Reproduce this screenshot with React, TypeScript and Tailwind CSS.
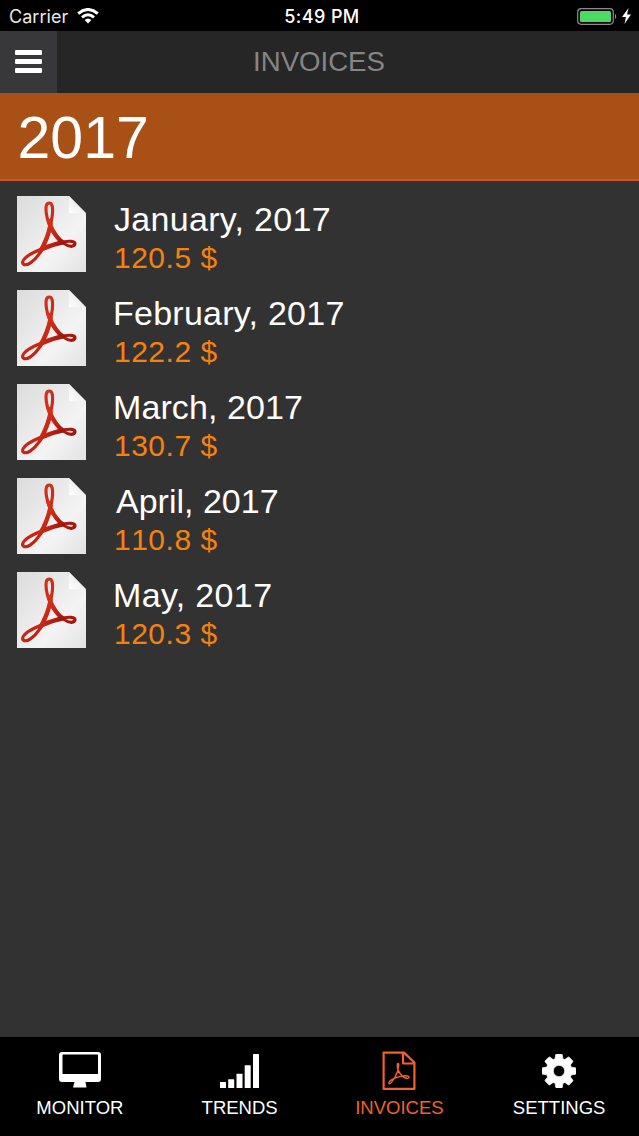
const invoices = [
  { month: "January, 2017", amount: "120.5 $", offset: "pl-[28px] tracking-[0.3px]" },
  { month: "February, 2017", amount: "122.2 $", offset: "pl-[27px] tracking-[0.25px]" },
  { month: "March, 2017", amount: "130.7 $", offset: "pl-[27px] tracking-[0.1px]" },
  { month: "April, 2017", amount: "110.8 $", offset: "pl-[30px]" },
  { month: "May, 2017", amount: "120.3 $", offset: "pl-[27px] tracking-[0.35px]" },
];

const tabs = [
  {
    label: "MONITOR",
    icon: (
      <svg className="mb-[2px] h-[36px] w-[42px]" viewBox="0 0 42 36" fill="currentColor">
        <path
          fillRule="evenodd"
          d="M3 0H39a3 3 0 0 1 3 3V27a3 3 0 0 1-3 3H26.500L27.500 35.500H14L15.500 30H3a3 3 0 0 1-3-3V3a3 3 0 0 1 3-3zM4 2.500Q3.500 2.500 3.500 3V22H39V3Q39 2.500 38.500 2.500z"
        />
      </svg>
    ),
  },
  {
    label: "TRENDS",
    icon: (
      <svg className="mb-[2px] h-[34px] w-[39px]" viewBox="0 0 39 34" fill="currentColor">
        <rect x="0" y="28" width="6" height="6" rx=".5" />
        <rect x="8.200" y="25.200" width="6" height="8.800" rx=".5" />
        <rect x="16.500" y="19.700" width="6" height="14.300" rx=".5" />
        <rect x="24.700" y="11.300" width="6" height="22.700" rx=".5" />
        <rect x="33" y="0" width="6" height="34" rx=".5" />
      </svg>
    ),
  },
  {
    label: "INVOICES",
    active: true,
    icon: (
      <svg className="h-[39px] w-[34px]" viewBox="0 0 34 39" fill="none" stroke="currentColor" strokeLinejoin="round" strokeLinecap="round">
        <path strokeWidth="2.200" d="M1.600 1.600H22L32.400 11.500V37.900H1.600zM21 1.600V12.500H32.400" />
        <path
          strokeWidth="1.500"
          d="M16 12.500C15 12.500 15.200 15 15.700 17.500C16.800 21.500 19 24.500 22.500 26.500C24.500 27.700 27 27.700 27 26.300C27 25 24.500 24.500 21.500 24.900C17 25.500 12.500 26.700 9.500 28.800C7 30.500 6.300 32.300 7.300 32.700C8.600 33.200 11 29.500 13 26C15 22.500 16.500 17.500 16.700 15C16.800 13.200 16.700 12.500 16 12.500z"
        />
      </svg>
    ),
  },
  {
    label: "SETTINGS",
    icon: (
      <svg className="mb-[2px] mr-px h-[34px] w-[34px]" viewBox="0 0 1536 1536" fill="currentColor" stroke="currentColor" strokeWidth="30" strokeLinejoin="round">
        <path d="M1024 768q0-106-75-181t-181-75-181 75-75 181 75 181 181 75 181-75 75-181zM1536 659v222q0 12-8 23t-20 13l-185 28q-19 54-39 91 35 50 107 138 10 12 10 25t-9 23q-27 37-99 108t-94 71q-12 0-26-9l-138-108q-44 23-91 38-16 136-29 186-7 28-36 28h-222q-14 0-24.500-8.500t-11.500-21.500l-28-184q-49-16-90-37l-141 107q-10 9-25 9-14 0-25-11-126-114-165-168-7-10-7-23 0-12 8-23 15-21 51-66.500t54-70.500q-27-50-41-99l-183-27q-13-2-21-12.500t-8-23.500v-222q0-12 8-23t19-13l186-28q14-46 39-92-40-57-107-138-10-12-10-24 0-10 9-23 26-36 98.500-107.500t94.500-71.500q13 0 26 10l138 107q44-23 91-38 16-136 29-186 7-28 36-28h222q14 0 24.500 8.500t11.500 21.500l28 184q49 16 90 37l142-107q9-9 24-9 13 0 25 10 129 119 165 170 7 8 7 22 0 12-8 23-15 21-51 66.500t-54 70.500q26 50 41 98l183 28q13 2 21 12.500t8 23.500z" />
      </svg>
    ),
  },
];

function PdfIcon() {
  return (
    <svg className="h-[76px] w-[69px] shrink-0" viewBox="0 0 207 228" fill="none">
      <defs>
        <linearGradient id="page" x1="0" y1="0" x2="1" y2="1">
          <stop offset="0" stopColor="#dcdcdc" />
          <stop offset=".3" stopColor="#e6e6e6" />
          <stop offset=".65" stopColor="#f4f4f4" />
          <stop offset="1" stopColor="#e2e2e2" />
        </linearGradient>
        <linearGradient id="fold" x1="0" y1="1" x2="1" y2="0">
          <stop offset="0" stopColor="#ffffff" />
          <stop offset="1" stopColor="#e0e0e0" />
        </linearGradient>
        <linearGradient id="ribbon" x1="0" y1="0" x2="1" y2="1">
          <stop offset="0" stopColor="#dc3a22" />
          <stop offset=".55" stopColor="#c42513" />
          <stop offset="1" stopColor="#8f0d08" />
        </linearGradient>
      </defs>
      <path d="M0 0H156L207 52V228H0z" fill="url(#page)" />
      <path d="M156 0L207 52H156z" fill="url(#fold)" />
      {/* one closed ribbon, with the long legs drawn again to be heavier than the loops */}
      <path
        d="M97 21C86 21 86 36 88 53C91 78 102 100 118 120C134 139 150 151 163 151C178 149 177 137 163 136C138 134 88 150 53 168C25 181 11 197 19 204C28 212 51 197 67 173C86 143 102 92 106 58C108 34 106 21 97 21z"
        stroke="url(#ribbon)"
        strokeWidth="9.500"
        strokeLinejoin="round"
      />
      <path
        d="M95 74C100 92 107 106 118 120C124 128 131 135 137 139M70 166C84 142 96 110 101 84M74 160C92 151 116 143 138 139"
        stroke="url(#ribbon)"
        strokeWidth="13"
        strokeLinecap="round"
      />
    </svg>
  );
}

function StatusBar() {
  return (
    <div className="grid h-[31px] grid-cols-3 items-center bg-black font-['Inter',sans-serif] text-[18px] leading-[31px] text-[#e8e8e8]">
      <div className="flex items-center gap-[9px] pl-[9px]">
        <span className="pt-px tracking-[0.05px]">Carrier</span>
        <svg className="h-[16px] w-[22px]" viewBox="0 0 22 16" fill="none" stroke="white" strokeWidth="3">
          <path d="M1.200 5.600Q11-2.600 20.800 5.600" />
          <path d="M5 9.300Q11 4.200 17 9.300" />
          <path d="M11 15.500L7.600 12Q11 9 14.400 12z" fill="white" stroke="none" />
        </svg>
      </div>
      <div className="pl-[5px] pt-px text-center font-medium tracking-[0.4px] text-white">5:49 PM</div>
      <div className="flex items-center justify-end gap-[4px] pr-[8px]">
        <svg className="h-[17px] w-[41px]" viewBox="0 0 41 17">
          <rect x=".7" y=".7" width="35.600" height="15.600" rx="3.500" fill="none" stroke="#8c8c8c" strokeWidth="1.200" />
          <rect x="3" y="3" width="31" height="11" rx="1.500" fill="#4cd964" />
          <path d="M38 5.500Q40.500 8.500 38 11.500z" fill="#8c8c8c" />
        </svg>
        <svg className="h-[16px] w-[9px]" viewBox="0 0 9 16" fill="white">
          <path d="M6.500 0L0 9H4L2.500 16L9 6.500H5z" />
        </svg>
      </div>
    </div>
  );
}

export default function App() {
  return (
    <div className="flex h-[1136px] w-[639px] flex-col overflow-hidden bg-[#333233] font-['Liberation_Sans',Arial,sans-serif] text-white">
      <StatusBar />

      <header className="flex h-[62px] bg-[#272627]">
        <button className="flex w-[57px] items-center justify-center bg-[#38373a] pb-px" aria-label="Menu">
          <svg className="h-[23px] w-[27px]" viewBox="0 0 27 23" fill="currentColor">
            <rect width="27" height="5" rx="1" />
            <rect y="9" width="27" height="5" rx="1" />
            <rect y="18" width="27" height="5" rx="1" />
          </svg>
        </button>
        <h1 className="flex-1 pr-[58px] text-center text-[27.600px] leading-[62px] text-[#858585]">INVOICES</h1>
      </header>

      <h2 className="h-[88px] border-b-2 border-[#cb5530] bg-[#a95016] pl-[17.500px] text-[59px] leading-[90px]">2017</h2>

      <main className="flex flex-1 flex-col gap-[18px] pl-[17px] pt-[15px]">
        {invoices.map((inv) => (
          <div key={inv.month} className="flex h-[76px]">
            <PdfIcon />
            <div>
              <div className={`h-[42px] text-[34px] leading-[46px] ${inv.offset}`}>{inv.month}</div>
              <div className="pl-[28px] text-[30px] leading-[40px] tracking-[0.5px] text-[#f5820f] [font-kerning:none]">{inv.amount}</div>
            </div>
          </div>
        ))}
      </main>

      <nav className="grid h-[99px] grid-cols-4 bg-black">
        {tabs.map((tab) => (
          <div key={tab.label} className={`flex flex-col items-center ${tab.active ? "text-[#f0612f]" : "text-white"}`}>
            <div className="flex h-[54px] items-end pb-px">{tab.icon}</div>
            <span className="text-[18.500px] leading-[34px]">{tab.label}</span>
          </div>
        ))}
      </nav>
    </div>
  );
}
